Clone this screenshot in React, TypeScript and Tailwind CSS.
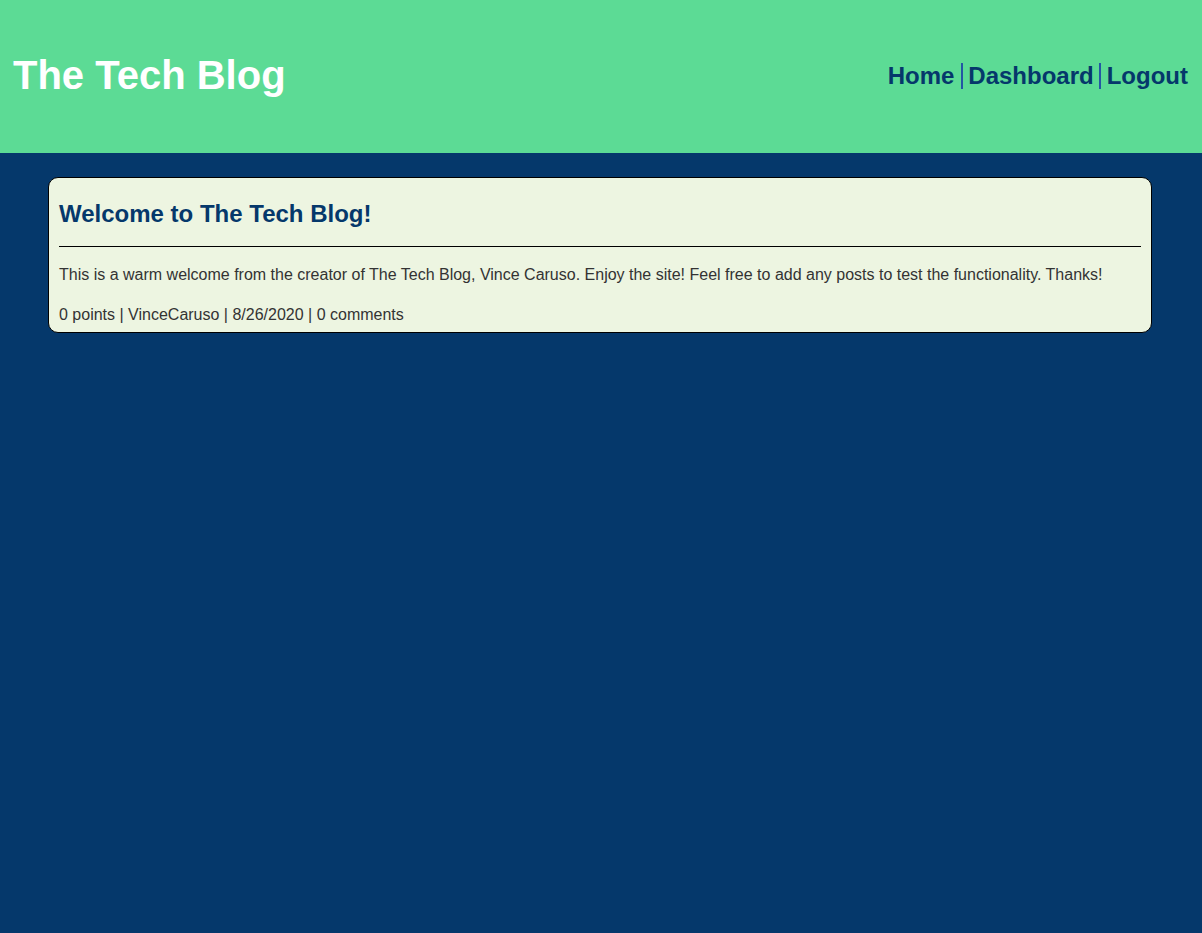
import React from "react";

export default function App() {
  return (
    <div
      className="min-h-[933px] bg-[#05386b]"
      style={{ fontFamily: '"Liberation Sans", Arial, sans-serif' }}
    >
      <header className="h-[153px] bg-[#5cdb95] flex items-center justify-between pl-[13px] pr-[14px] pb-[2px]">
        <h1 className="text-[40px] leading-[46px] font-bold text-white mb-[2px]">The Tech Blog</h1>
        <nav className="flex items-center text-[24px] leading-[28px] font-bold text-[#05386b]">
          <a className="pr-[7px]">Home</a>
          <span className="w-[2px] h-[26px] bg-[#2357a3]" />
          <a className="pl-[5px] pr-[5px]">Dashboard</a>
          <span className="w-[2px] h-[26px] bg-[#2357a3]" />
          <a className="pl-[6px]">Logout</a>
        </nav>
      </header>
      <main className="pt-[24px] pl-[48px] pr-[50px]">
        <article className="bg-[#edf5e1] border border-black rounded-[10px] pt-[22px] pb-[8px] px-[10px]">
          <h2 className="text-[24px] leading-[28px] font-bold text-[#05386b]">
            Welcome to The Tech Blog!
          </h2>
          <hr className="mt-[18px] border-0 border-t border-black" />
          <p className="mt-[19px] text-[16px] leading-[18px] text-[#333]">
            This is a warm welcome from the creator of The Tech Blog, Vince Caruso. Enjoy the site! Feel free to add any posts to test the functionality. Thanks!
          </p>
          <p className="mt-[22px] text-[16px] leading-[18px] text-[#333]">
            0 points | VinceCaruso | 8/26/2020 | 0 comments
          </p>
        </article>
      </main>
    </div>
  );
}
